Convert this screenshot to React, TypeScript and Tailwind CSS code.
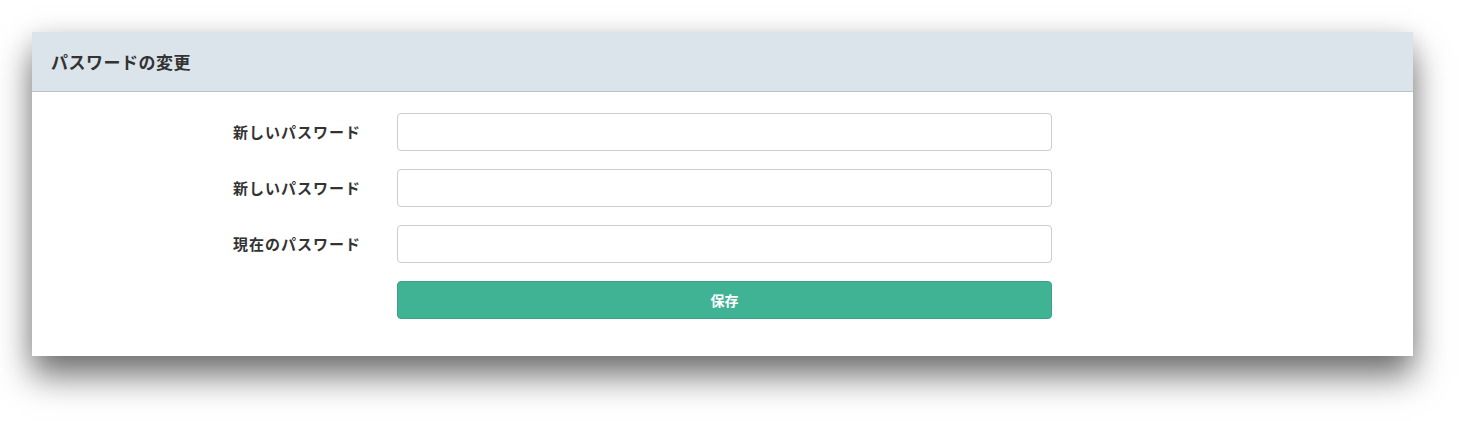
import React from 'react';

const fields = ['新しいパスワード', '新しいパスワード', '現在のパスワード'];

const App: React.FC = () => {
  return (
    <div
      className="w-[1478px] h-[421px] bg-white pt-[32px] pl-[32px]"
      style={{ fontFamily: '"Noto Sans CJK JP", "Noto Sans", sans-serif' }}
    >
      <div className="w-[1381px] bg-white shadow-[0_20px_32px_rgba(0,0,0,0.55),0_0_22px_rgba(0,0,0,0.08)]">
        {/* Header */}
        <div className="h-[60px] bg-[#dae4ea] border-b border-[#b9c4cb] flex items-center pl-[19px]">
          <h2 className="text-[17px] font-bold text-[#333] tracking-[0.5px]">パスワードの変更</h2>
        </div>

        {/* Body */}
        <div className="pt-[21px] pb-[37px] flex flex-col gap-[18px]">
          {fields.map((label, i) => (
            <div key={i} className="flex items-center">
              <label className="w-[329px] text-right text-[15px] font-bold text-[#333] tracking-[1px]">
                {label}
              </label>
              <input
                type="password"
                className="ml-[36px] w-[655px] h-[38px] rounded-[4px] border border-[#cccccc] bg-white px-3 outline-none"
              />
            </div>
          ))}
          <div className="flex">
            <button className="ml-[365px] w-[655px] h-[38px] rounded-[4px] bg-[#41b395] border border-[#38a487] text-white text-[14px] font-bold">
              保存
            </button>
          </div>
        </div>
      </div>
    </div>
  );
};

export default App;
